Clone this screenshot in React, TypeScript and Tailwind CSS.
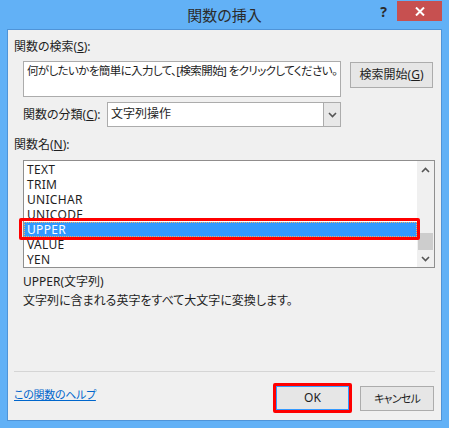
const rows = ["TEXT", "TRIM", "UNICHAR", "UNICODE", "UPPER", "VALUE", "YEN"];

function Chevron({ dir }: { dir: "up" | "down" }) {
  return (
    <svg width="9" height="6" viewBox="0 0 9 6" className="block">
      <polyline
        points={dir === "up" ? "1,5 4.5,1.5 8,5" : "1,1 4.5,4.5 8,1"}
        fill="none"
        stroke="#555"
        strokeWidth="1.6"
      />
    </svg>
  );
}

export default function App() {
  return (
    <div className="h-[428px] w-[449px] overflow-hidden bg-[#62b1f6] font-['Noto_Sans','Noto_Sans_CJK_JP',sans-serif] text-[12px] text-[#1e1e1e] [font-feature-settings:'palt']">
      {/* title bar */}
      <header className="grid h-[30px] grid-cols-[1fr_auto_1fr]">
        <div />
        <div className="flex items-center text-[15px] text-[#2b2b2b]">関数の挿入</div>
        <div className="flex items-start justify-end pr-[7px]">
          <span className="mr-[10px] mt-[3px] text-[14px] font-bold leading-[18px] text-[#2b2b2b]">?</span>
          <button className="mt-[1px] flex h-[20px] w-[45px] items-center justify-center bg-[#c75050]">
            <svg width="10" height="9" viewBox="0 0 10 9">
              <path d="M1 0.5 L9 8.5 M9 0.5 L1 8.5" stroke="#fff" strokeWidth="2" />
            </svg>
          </button>
        </div>
      </header>

      {/* client area */}
      <main className="ml-[8px] flex h-[390px] w-[433px] flex-col bg-[#f0f0f0] pl-[6px] leading-[16px] shadow-[0_0_0_1px_#4f94d8]">
        <div className="mt-[9px]">
          関数の検索(<span className="underline">S</span>):
        </div>

        <div className="mt-[6px] flex items-start pl-[9px]">
          <div className="h-[36px] w-[318px] overflow-hidden whitespace-nowrap border border-[#acacac] bg-white px-[3px] pt-[1px] text-[11.5px] tracking-[-0.6px]">
            何がしたいかを簡単に入力して、[検索開始] をクリックしてください。
          </div>
          <button className="ml-[9px] mt-[1px] h-[26px] w-[83px] border border-[#acacac] bg-[#e6e6e6]">
            検索開始(<span className="underline">G</span>)
          </button>
        </div>

        <div className="mt-[5px] flex items-center pl-[9px]">
          <span className="w-[84px]">
            関数の分類(<span className="underline">C</span>):
          </span>
          <div className="flex h-[25px] w-[234px] border border-[#acacac] bg-white">
            <span className="flex-1 pl-[3px] pt-[3px]">文字列操作</span>
            <span className="flex w-[17px] items-center justify-center border-l border-[#acacac] bg-[#e8e8e8]">
              <Chevron dir="down" />
            </span>
          </div>
        </div>

        <div className="mt-[10px]">
          関数名(<span className="underline">N</span>):
        </div>

        {/* function list */}
        <div className="ml-[9px] mt-[7px] flex h-[108px] w-[412px] border border-[#8f8f8f] bg-white">
          <ul className="flex-1 pt-[1px] text-[12px] tracking-[0.3px]">
            {rows.map((r) =>
              r === "UPPER" ? (
                <li
                  key={r}
                  className="relative h-[15px] border border-dotted border-[#f5b06a] bg-[#3399ff] pl-[2px] leading-[13px] text-white"
                >
                  {r}
                  <span className="absolute -bottom-[4px] -left-[6px] -right-[4px] -top-[5px] z-10 rounded-[2px] border-[3px] border-[#ff0000]" />
                </li>
              ) : (
                <li key={r} className="h-[15px] pl-[3px] leading-[15px]">
                  {r}
                </li>
              )
            )}
          </ul>
          <div className="flex w-[17px] flex-col bg-[#f0f0f0]">
            <span className="flex h-[17px] items-center justify-center">
              <Chevron dir="up" />
            </span>
            <span className="mx-auto mt-auto h-[17px] w-[15px] bg-[#cdcdcd]" />
            <span className="flex h-[17px] items-center justify-center">
              <Chevron dir="down" />
            </span>
          </div>
        </div>

        <div className="mt-[6px] pl-[9px]">UPPER(文字列)</div>
        <div className="mt-[3px] pl-[9px]">文字列に含まれる英字をすべて大文字に変換します。</div>

        <div className="mt-[62px] h-px w-[421px] bg-[#d5d5d5]" />

        <div className="mt-[14px] flex items-start pr-[7px]">
          <a className="mt-[1px] text-[11px] tracking-[-0.3px] text-[#0066cc] underline">この関数のヘルプ</a>
          <div className="relative ml-auto">
            <button className="h-[24px] w-[73px] border border-[#3399ff] bg-[#e6e6e6]">OK</button>
            <span className="absolute -inset-[3px] rounded-[2px] border-[3px] border-[#ff0000]" />
          </div>
          <button className="ml-[11px] h-[25px] w-[74px] border border-[#acacac] bg-[#e6e6e6] text-[11px] tracking-[-0.8px]">
            キャンセル
          </button>
        </div>
      </main>
    </div>
  );
}
